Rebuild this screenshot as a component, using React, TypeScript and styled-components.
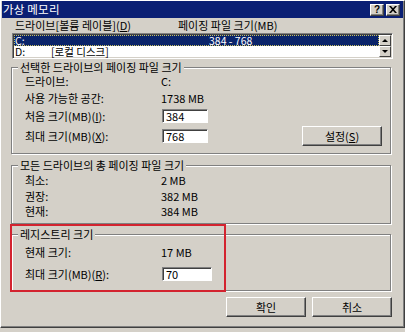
import styled, { createGlobalStyle } from "styled-components";

const GlobalStyle = createGlobalStyle`
  html, body {
    margin: 0;
    padding: 0;
    background: #d4d0c8;
  }
  body {
    font-family: "Noto Sans CJK KR", "Noto Sans", sans-serif;
    font-size: 11px;
    color: #000;
  }
`;

type Field = { label: React.ReactNode; value?: string; input?: string; height: number };

const selectedFields: Field[] = [
  { label: "드라이브:", value: "C:", height: 16 },
  { label: "사용 가능한 공간:", value: "1738 MB", height: 18 },
  {
    label: (
      <>
        처음 크기(MB)(<u>I</u>):
      </>
    ),
    input: "384",
    height: 18,
  },
];

const totalFields: Field[] = [
  { label: "최소:", value: "2 MB", height: 16 },
  { label: "권장:", value: "382 MB", height: 15 },
  { label: "현재:", value: "384 MB", height: 16 },
];

const App = () => {
  return (
    <>
      <GlobalStyle />
      <Window>
        <TitleBar>
          <TitleText>가상 메모리</TitleText>
          <CaptionButtons>
            <CaptionButton>?</CaptionButton>
            <CaptionButton>
              <svg width="8" height="7" viewBox="0 0 8 7">
                <path d="M0 0h2l2 2.2L6 0h2L5 3.5 8 7H6L4 4.8 2 7H0l3-3.5z" fill="#000" />
              </svg>
            </CaptionButton>
          </CaptionButtons>
        </TitleBar>

        <Body>
          <HeaderRow>
            <HeaderCell $width={163}>
              드라이브[볼륨 레이블](<u>D</u>)
            </HeaderCell>
            <HeaderCell>페이징 파일 크기(MB)</HeaderCell>
          </HeaderRow>

          <DriveList>
            <DriveRows>
              <DriveRow $selected>
                <span>C:</span>
                <span></span>
                <span>384 - 768</span>
              </DriveRow>
              <DriveRow>
                <span>D:</span>
                <span>[로컬 디스크]</span>
                <span></span>
              </DriveRow>
            </DriveRows>
            <ScrollBar>
              <ScrollButton>
                <Arrow $up />
              </ScrollButton>
              <ScrollButton>
                <Arrow />
              </ScrollButton>
            </ScrollBar>
          </DriveList>

          <GroupBox $top={8} $pt={5} $pb={6}>
            <GroupCaption>선택한 드라이브의 페이징 파일 크기</GroupCaption>
            {selectedFields.map((f, i) => (
              <FieldRow key={i} $height={f.height}>
                <FieldLabel>{f.label}</FieldLabel>
                {f.input ? <TextBox $width={46}>{f.input}</TextBox> : <span>{f.value}</span>}
              </FieldRow>
            ))}
            <FieldRow $height={22}>
              <FieldLabel>
                최대 크기(MB)(<u>X</u>):
              </FieldLabel>
              <TextBox $width={46}>768</TextBox>
              <PushButton $push>
                설정(<u>S</u>)
              </PushButton>
            </FieldRow>
          </GroupBox>

          <GroupBox $top={11} $pt={6} $pb={4}>
            <GroupCaption>모든 드라이브의 총 페이징 파일 크기</GroupCaption>
            {totalFields.map((f, i) => (
              <FieldRow key={i} $height={f.height}>
                <FieldLabel>{f.label}</FieldLabel>
                <span>{f.value}</span>
              </FieldRow>
            ))}
          </GroupBox>

          <GroupBox $top={10} $pt={9} $pb={6}>
            <GroupCaption>레지스트리 크기</GroupCaption>
            <FieldRow $height={16}>
              <FieldLabel>현재 크기:</FieldLabel>
              <span>17 MB</span>
            </FieldRow>
            <FieldRow $height={20} $gap={4}>
              <FieldLabel>
                최대 크기(MB)(<u>R</u>):
              </FieldLabel>
              <TextBox $width={50}>70</TextBox>
            </FieldRow>
            <Highlight />
          </GroupBox>

          <ButtonBar>
            <PushButton>확인</PushButton>
            <PushButton>취소</PushButton>
          </ButtonBar>
        </Body>
      </Window>
    </>
  );
};

export default App;

const Window = styled.div`
  width: 405px;
  height: 328px;
  box-sizing: border-box;
  background: #d4d0c8;
  border-top: 1px solid #fff;
  border-left: 1px solid #fff;
  border-right: 1px solid #404040;
  border-bottom: 1px solid #404040;
  box-shadow: inset -1px -1px 0 #808080;
  padding: 0 1px 1px 1px;
  display: flex;
  flex-direction: column;
`;

const TitleBar = styled.div`
  height: 17px;
  background: #0a1f74;
  display: flex;
  align-items: center;
  justify-content: space-between;
  padding: 0 3px 0 1px;
`;

const TitleText = styled.span`
  color: #fff;
  font-size: 11.5px;
  line-height: 13px;
  letter-spacing: 0.2px;
`;

const CaptionButtons = styled.div`
  display: flex;
  gap: 2px;
`;

const CaptionButton = styled.div`
  width: 14px;
  height: 12px;
  box-sizing: border-box;
  background: #d4d0c8;
  border-top: 1px solid #fff;
  border-left: 1px solid #fff;
  border-right: 1px solid #404040;
  border-bottom: 1px solid #404040;
  box-shadow: inset -1px -1px 0 #808080;
  display: flex;
  align-items: center;
  justify-content: center;
  font-family: "Liberation Sans", sans-serif;
  font-weight: 700;
  font-size: 10px;
  line-height: 10px;
`;

const Body = styled.div`
  flex: 1;
  display: flex;
  flex-direction: column;
  padding: 0 11px 0 9px;
`;

const HeaderRow = styled.div`
  display: flex;
  height: 12px;
  line-height: 12px;
  margin-top: 1px;
  padding-left: 4px;
`;

const HeaderCell = styled.span<{ $width?: number }>`
  width: ${({ $width }) => ($width ? `${$width}px` : "auto")};
  white-space: nowrap;
`;

const DriveList = styled.div`
  margin: 2px -1px 0 1px;
  height: 26px;
  box-sizing: border-box;
  display: flex;
  background: #fff;
  border-top: 1px solid #808080;
  border-left: 1px solid #808080;
  border-right: 1px solid #fff;
  border-bottom: 1px solid #fff;
  box-shadow: inset 1px 1px 0 #404040, inset -1px -1px 0 #d4d0c8;
  padding: 1px;
`;

const DriveRows = styled.div`
  flex: 1;
  display: flex;
  flex-direction: column;
`;

const DriveRow = styled.div<{ $selected?: boolean }>`
  height: 11px;
  line-height: 11px;
  font-size: 10.5px;
  display: grid;
  grid-template-columns: 36px 158px 1fr;
  padding-left: 1px;
  white-space: nowrap;
  background: ${({ $selected }) => ($selected ? "#0a246a" : "transparent")};
  color: ${({ $selected }) => ($selected ? "#fff" : "#000")};
  outline: ${({ $selected }) => ($selected ? "1px dotted #c8c060" : "none")};
  outline-offset: -1px;
`;

const ScrollBar = styled.div`
  width: 12px;
  display: flex;
  flex-direction: column;
`;

const ScrollButton = styled.div`
  height: 11px;
  box-sizing: border-box;
  background: #d4d0c8;
  border-top: 1px solid #fff;
  border-left: 1px solid #fff;
  border-right: 1px solid #404040;
  border-bottom: 1px solid #404040;
  display: flex;
  align-items: center;
  justify-content: center;
`;

const Arrow = styled.div<{ $up?: boolean }>`
  width: 0;
  height: 0;
  border-left: 3px solid transparent;
  border-right: 3px solid transparent;
  ${({ $up }) => ($up ? "border-bottom: 3px solid #000;" : "border-top: 3px solid #000;")}
`;

const GroupBox = styled.div<{ $top: number; $pt: number; $pb: number }>`
  position: relative;
  margin-top: ${({ $top }) => $top}px;
  margin-right: 1px;
  padding: ${({ $pt }) => $pt}px 8px ${({ $pb }) => $pb}px 13px;
  border: 1px solid #808080;
  box-shadow: 1px 1px 0 #fff, inset 1px 1px 0 #fff;
  display: flex;
  flex-direction: column;
`;

const GroupCaption = styled.span`
  position: absolute;
  top: -7px;
  left: 6px;
  padding: 0 2px;
  line-height: 12px;
  background: #d4d0c8;
  white-space: nowrap;
`;

const FieldRow = styled.div<{ $height: number; $gap?: number }>`
  height: ${({ $height }) => $height}px;
  margin-top: ${({ $gap }) => $gap ?? 0}px;
  display: flex;
  align-items: center;
  line-height: 12px;
  white-space: nowrap;
`;

const FieldLabel = styled.span`
  width: 136px;
`;

const TextBox = styled.div<{ $width: number }>`
  width: ${({ $width }) => $width}px;
  height: 14px;
  box-sizing: border-box;
  background: #fff;
  border-top: 1px solid #808080;
  border-left: 1px solid #808080;
  border-right: 1px solid #fff;
  border-bottom: 1px solid #fff;
  box-shadow: inset 1px 1px 0 #404040;
  padding-left: 3px;
  line-height: 12px;
  margin-left: 1px;
`;

const PushButton = styled.div<{ $push?: boolean }>`
  width: 80px;
  height: 20px;
  box-sizing: border-box;
  margin-left: ${({ $push }) => ($push ? "auto" : "0")};
  background: #d4d0c8;
  border-top: 1px solid #fff;
  border-left: 1px solid #fff;
  border-right: 1px solid #404040;
  border-bottom: 1px solid #404040;
  box-shadow: inset -1px -1px 0 #808080;
  display: flex;
  align-items: center;
  justify-content: center;
  line-height: 12px;
`;

const ButtonBar = styled.div`
  display: flex;
  justify-content: flex-end;
  gap: 6px;
  margin-top: 6px;
`;

const Highlight = styled.div`
  position: absolute;
  left: -2px;
  top: -11px;
  width: 216px;
  height: 68px;
  box-sizing: border-box;
  border: 2px solid #d3232f;
  pointer-events: none;
`;
